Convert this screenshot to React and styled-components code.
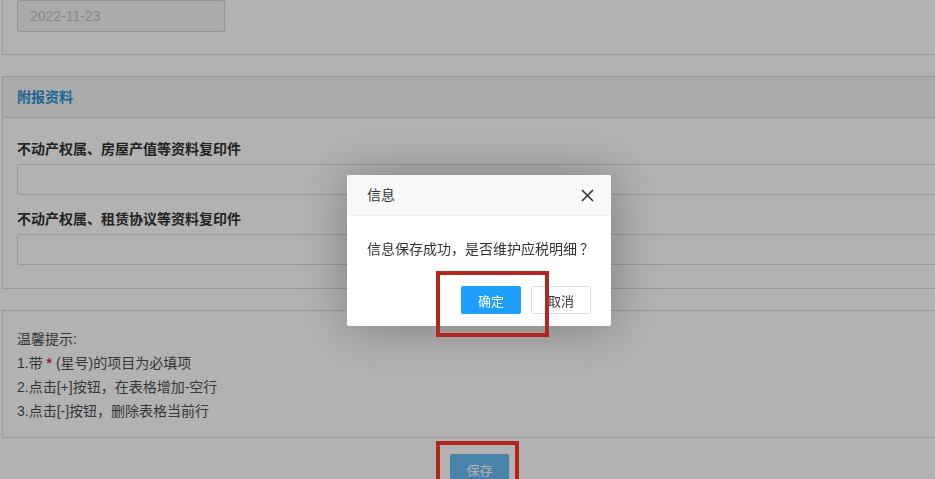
import React from "react";
import styled, { createGlobalStyle } from "styled-components";

const Global = createGlobalStyle`
  html, body {
    margin: 0;
    padding: 0;
    background: #ffffff;
    overflow: hidden;
  }
  body {
    font-family: "Liberation Sans", "Noto Sans CJK SC", sans-serif;
    color: #333;
  }
`;

const Page = styled.div`
  width: 955px;
  margin-left: 2px;
  display: flex;
  flex-direction: column;
`;

const Panel = styled.section`
  border: 1px solid #dcdcdc;
  border-top: ${(p) => (p.$cut ? "none" : "1px solid #dcdcdc")};
  background: #fff;
  margin-top: ${(p) => p.$gap || 0}px;
  padding: ${(p) => p.$pad || "0"};
  display: flex;
  flex-direction: column;
`;

const DateInput = styled.div`
  width: 208px;
  height: 32px;
  box-sizing: border-box;
  border: 1px solid #d6d6d6;
  border-radius: 2px;
  background: #f4f4f4;
  color: #c4c4c4;
  font-size: 14px;
  line-height: 30px;
  padding-left: 12px;
`;

const PanelHeader = styled.header`
  height: 40px;
  line-height: 40px;
  padding: 0 14px;
  background: #f4f4f4;
  border-bottom: 1px solid #dcdcdc;
  color: #2a92d4;
  font-weight: bold;
  font-size: 14px;
`;

const PanelBody = styled.div`
  padding: 21px 14px 23px;
  display: flex;
  flex-direction: column;
`;

const FieldLabel = styled.div`
  font-size: 14px;
  font-weight: bold;
  line-height: 20px;
  color: #333;
  margin-top: ${(p) => (p.$first ? 0 : 14)}px;
  margin-bottom: 5px;
`;

const FieldBox = styled.div`
  height: 31px;
  box-sizing: border-box;
  border: 1px solid #dcdcdc;
  border-radius: 2px;
  background: #fff;
`;

const Tips = styled.div`
  padding: 16px 14px 14px;
  font-size: 14px;
  line-height: 24px;
  color: #505050;
`;

const Star = styled.span`
  color: #e53030;
  font-weight: bold;
`;

const Actions = styled.div`
  display: flex;
  justify-content: center;
  margin-top: 16px;
`;

const SaveButton = styled.button`
  width: 59px;
  height: 30px;
  border: none;
  border-radius: 2px;
  background: #68bcf4;
  color: #fff;
  font-family: inherit;
  font-size: 13px;
  padding: 0;
`;

const Shade = styled.div`
  position: fixed;
  inset: 0;
  background: rgba(0, 0, 0, 0.3);
`;

const Dialog = styled.div`
  position: fixed;
  left: 347px;
  top: 175px;
  width: 264px;
  background: #fff;
  border-radius: 2px;
  box-shadow: 1px 1px 50px rgba(0, 0, 0, 0.3);
  display: flex;
  flex-direction: column;
`;

const DialogTitle = styled.div`
  height: 40px;
  line-height: 40px;
  padding: 0 20px;
  background: #f8f8f8;
  border-bottom: 1px solid #f0f0f0;
  font-size: 14px;
  color: #333;
  display: flex;
  align-items: center;
  justify-content: space-between;
  border-radius: 2px 2px 0 0;
`;

const CloseIcon = styled.svg`
  width: 13px;
  height: 13px;
  margin-right: -3px;
`;

const DialogContent = styled.div`
  padding: 21px 20px 20px;
  font-size: 14px;
  line-height: 24px;
  color: #333;
  white-space: nowrap;
`;

const Question = styled.span`
  margin-left: 3px;
`;

const DialogButtons = styled.div`
  display: flex;
  justify-content: flex-end;
  gap: 10px;
  padding: 5px 20px 12px;
`;

const DialogBtn = styled.button`
  width: 60px;
  height: 28px;
  box-sizing: border-box;
  border-radius: 2px;
  font-family: inherit;
  font-size: 13px;
  padding: 0;
  border: 1px solid ${(p) => (p.$primary ? "#1e9fff" : "#dedede")};
  background: ${(p) => (p.$primary ? "#1e9fff" : "#fff")};
  color: ${(p) => (p.$primary ? "#fff" : "#333")};
`;

const Mark = styled.div`
  position: fixed;
  box-sizing: border-box;
  border: 4px solid #b3261e;
  left: ${(p) => p.$x}px;
  top: ${(p) => p.$y}px;
  width: ${(p) => p.$w}px;
  height: ${(p) => p.$h}px;
`;

export default function App() {
  return (
    <>
      <Global />
      <Page>
        <Panel $cut $pad="0 14px 22px">
          <DateInput>2022-11-23</DateInput>
        </Panel>
        <Panel $gap={21}>
          <PanelHeader>附报资料</PanelHeader>
          <PanelBody>
            <FieldLabel $first>不动产权属、房屋产值等资料复印件</FieldLabel>
            <FieldBox />
            <FieldLabel>不动产权属、租赁协议等资料复印件</FieldLabel>
            <FieldBox />
          </PanelBody>
        </Panel>
        <Panel $gap={21}>
          <Tips>
            <div>温馨提示:</div>
            <div>
              1.带 <Star>*</Star> (星号)的项目为必填项
            </div>
            <div>2.点击[+]按钮，在表格增加-空行</div>
            <div>3.点击[-]按钮，删除表格当前行</div>
          </Tips>
        </Panel>
        <Actions>
          <SaveButton>保存</SaveButton>
        </Actions>
      </Page>
      <Shade />
      <Dialog>
        <DialogTitle>
          <span>信息</span>
          <CloseIcon viewBox="0 0 13 13">
            <path d="M1 1 L12 12 M12 1 L1 12" stroke="#333" strokeWidth="1.6" fill="none" />
          </CloseIcon>
        </DialogTitle>
        <DialogContent>
          信息保存成功，是否维护应税明细<Question>？</Question>
        </DialogContent>
        <DialogButtons>
          <DialogBtn $primary>确定</DialogBtn>
          <DialogBtn>取消</DialogBtn>
        </DialogButtons>
      </Dialog>
      <Mark $x={436} $y={271} $w={113} $h={66} />
      <Mark $x={436} $y={441} $w={83} $h={50} />
    </>
  );
}
